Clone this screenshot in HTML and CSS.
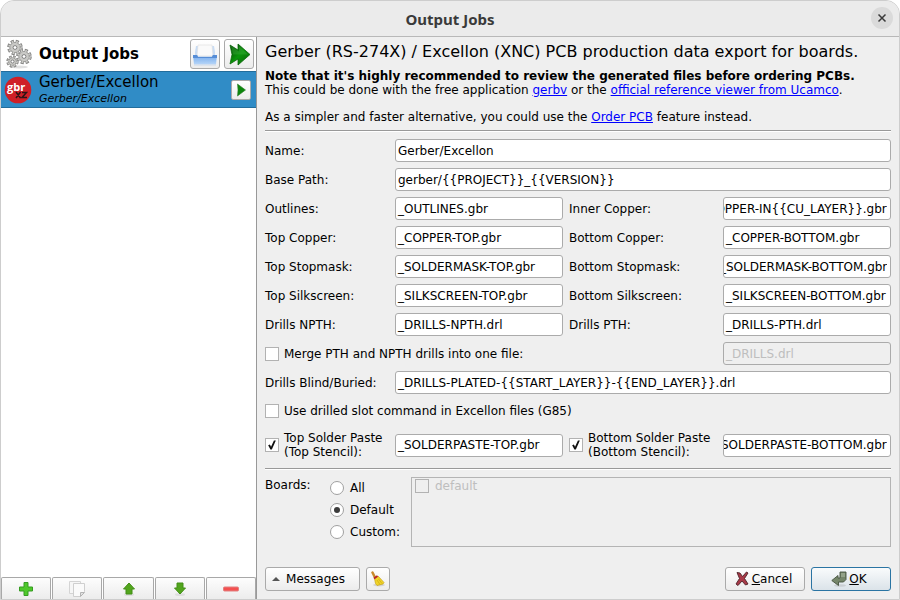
FILE: index.html
```html
<!DOCTYPE html>
<html lang="en">
<head>
<meta charset="utf-8">
<title>Output Jobs</title>
<link rel="stylesheet" href="styles.css">
</head>
<body>
<div class="window">
  <header class="titlebar">
    <h1>Output Jobs</h1>
    <button class="close" type="button" aria-label="Close"><svg width="10" height="10" viewBox="0 0 10 10"><path d="M1.500 1.500l7 7M8.500 1.500l-7 7" fill="none" stroke="#3a3a3a" stroke-width="1.500"/></svg></button>
  </header>
  <div class="content">
    <aside class="sidebar">
      <div class="side-head">
        <svg class="gears" width="26" height="30" viewBox="0 0 26 30">
          <ellipse cx="13" cy="28" rx="9" ry="1.500" fill="#e0e0e0"/>
          <g fill="none" stroke="#828280" stroke-width="3.200">
            <circle cx="9" cy="8.500" r="6.200" stroke-dasharray="3 1.870"/><circle cx="18" cy="17.500" r="6.200" stroke-dasharray="3 1.870"/><circle cx="6.500" cy="22.500" r="4.600" stroke-dasharray="2.300 1.313"/>
          </g>
          <g fill="#c9c9c6" stroke="#8a8a88" stroke-width=".8">
            <circle cx="9" cy="8.500" r="5.200"/><circle cx="18" cy="17.500" r="5.200"/><circle cx="6.500" cy="22.500" r="3.800"/>
          </g>
          <g fill="none" stroke="#c9c9c6" stroke-width="2.200">
            <circle cx="9" cy="8.500" r="5.800" stroke-dasharray="1.600 2.955" stroke-dashoffset="-.6"/><circle cx="18" cy="17.500" r="5.800" stroke-dasharray="1.600 2.955" stroke-dashoffset="-.6"/><circle cx="6.500" cy="22.500" r="4.200" stroke-dasharray="1.100 2.199" stroke-dashoffset="-.5"/>
          </g>
          <g fill="#fff" stroke="#777" stroke-width=".9">
            <circle cx="9" cy="8.500" r="1.900"/><circle cx="18" cy="17.500" r="1.900"/><circle cx="6.500" cy="22.500" r="1.500"/>
          </g>
        </svg>
        <h2>Output Jobs</h2>
        <button class="tool" type="button" aria-label="Open output directory">
          <svg width="26" height="26" viewBox="0 0 26 26">
            <defs><linearGradient id="tray" x2="0" y2="1"><stop stop-color="#5a92dc"/><stop offset=".35" stop-color="#8ab8f0"/><stop offset="1" stop-color="#b7d6f8"/></linearGradient></defs>
            <path d="M3 11l1-6h18l1 6v7H3z" fill="#c8dcf4"/>
            <path d="M6 4h14l1 11H5z" fill="#fafafa" stroke="#ddd" stroke-width=".6"/>
            <path d="M1 14h4l1 2h14l1-2h4l-1 9.500H2z" fill="url(#tray)"/>
            <path d="M1 14h4l1 2h14l1-2h4v3H1z" fill="#568dd6"/>
            <path d="M2 24h22" stroke="#ccd9ea"/>
          </svg>
        </button>
        <button class="tool" type="button" aria-label="Run all jobs">
          <svg width="26" height="26" viewBox="0 0 26 26">
            <defs><linearGradient id="go" x2="1" y2="1"><stop stop-color="#063c06"/><stop offset=".5" stop-color="#0b960b"/><stop offset="1" stop-color="#0a5a0a"/></linearGradient></defs>
            <path d="M4 4l8 5V3l12 10.500L12 24v-6l-8 5 2-9.500z" fill="url(#go)" stroke="#0a6a0a" stroke-width=".8"/>
            <path d="M5 5l8 5.500V5l9 8.500H7z" fill="#3fae3f" opacity=".4"/>
          </svg>
        </button>
      </div>
      <div class="job">
        <svg class="badge" width="28" height="28" viewBox="0 0 28 28">
          <circle cx="14" cy="14" r="13.300" fill="#cf2027"/>
          <text class="badge-top" x="3" y="15">gbr</text>
          <path d="M12 16l4.500 6M16.500 16l-4.500 6M18 16.500h4.500L18 21.500h5" fill="none" stroke="#2c1416" stroke-width="1.500"/>
        </svg>
        <div class="job-text"><div class="job-name">Gerber/Excellon</div><div class="job-type">Gerber/Excellon</div></div>
        <button class="run" type="button" aria-label="Run job"><svg width="14" height="14" viewBox="0 0 14 14"><path d="M3.500 1l8 6-8 6 .5-6z" fill="#0c860c" stroke="#2f7d2f" stroke-width=".6"/></svg></button>
      </div>
      <div class="side-tools">
        <button type="button" aria-label="Add"><svg width="16" height="16" viewBox="0 0 16 16"><path d="M6 1.500h4V6h4.500v4H10v4.500H6V10H1.500V6H6z" fill="#4fc82b" stroke="#369c22"/></svg></button>
        <button type="button" aria-label="Copy"><svg width="16" height="16" viewBox="0 0 16 16"><path d="M.5.500h11v12H.5z" fill="#f6f6f6" stroke="#d4d4d4"/><path d="M4.500 2.500h11v8l-4 5h-7z" fill="#fafafa" stroke="#cfcfcf"/><path d="M11.500 15.500l0-4h4z" fill="#e3e3e3" stroke="#b4b4b4"/></svg></button>
        <button type="button" aria-label="Move up"><svg width="16" height="16" viewBox="0 0 16 16"><ellipse cx="8" cy="13.500" rx="5" ry="1.500" fill="#ddd"/><path d="M8 2l5.500 6H11v5H5V8H2.500z" fill="#52a51d" stroke="#438f17"/></svg></button>
        <button type="button" aria-label="Move down"><svg width="16" height="16" viewBox="0 0 16 16"><ellipse cx="8" cy="13.500" rx="5" ry="1.500" fill="#ddd"/><path d="M5 2h6v5h2.500L8 13 2.500 7H5z" fill="#52a51d" stroke="#438f17"/></svg></button>
        <button type="button" aria-label="Remove"><svg width="16" height="16" viewBox="0 0 16 16"><rect x=".5" y="6" width="15" height="4" rx="1" fill="#f45050" stroke="#e08080"/></svg></button>
      </div>
    </aside>
    <main class="panel">
      <h2 class="headline">Gerber (RS-274X) / Excellon (XNC) PCB production data export for boards.</h2>
      <p class="note"><b>Note that it's highly recommended to review the generated files before ordering PCBs.</b><br>This could be done with the free application <a href="#">gerbv</a> or the <a href="#">official reference viewer from Ucamco</a>.</p>
      <p class="note">As a simpler and faster alternative, you could use the <a href="#">Order PCB</a> feature instead.</p>
      <hr>
      <form class="form" id="job-form">
        <label for="name">Name:</label><input class="wide" type="text" id="name" value="Gerber/Excellon">
        <label for="base">Base Path:</label><input class="wide" type="text" id="base" value="gerber/{{PROJECT}}_{{VERSION}}">
        <label for="outl">Outlines:</label><input type="text" id="outl" value="_OUTLINES.gbr">
        <label for="inner">Inner Copper:</label><input type="text" id="inner" value="_COPPER-IN{{CU_LAYER}}.gbr">
        <label for="tc">Top Copper:</label><input type="text" id="tc" value="_COPPER-TOP.gbr">
        <label for="bc">Bottom Copper:</label><input type="text" id="bc" value="_COPPER-BOTTOM.gbr">
        <label for="ts">Top Stopmask:</label><input type="text" id="ts" value="_SOLDERMASK-TOP.gbr">
        <label for="bs">Bottom Stopmask:</label><input type="text" id="bs" value="_SOLDERMASK-BOTTOM.gbr">
        <label for="tk">Top Silkscreen:</label><input type="text" id="tk" value="_SILKSCREEN-TOP.gbr">
        <label for="bk">Bottom Silkscreen:</label><input type="text" id="bk" value="_SILKSCREEN-BOTTOM.gbr">
        <label for="dn">Drills NPTH:</label><input type="text" id="dn" value="_DRILLS-NPTH.drl">
        <label for="dp">Drills PTH:</label><input type="text" id="dp" value="_DRILLS-PTH.drl">
        <label class="check span3"><input type="checkbox">Merge PTH and NPTH drills into one file:</label><input type="text" aria-label="Merged drills" value="_DRILLS.drl" disabled>
        <label for="bb">Drills Blind/Buried:</label><input class="wide" type="text" id="bb" value="_DRILLS-PLATED-{{START_LAYER}}-{{END_LAYER}}.drl">
        <label class="check slot"><input type="checkbox">Use drilled slot command in Excellon files (G85)</label>
        <label class="check paste"><input type="checkbox" checked><span>Top Solder Paste<br>(Top Stencil):</span></label><input type="text" aria-label="Top solder paste" value="_SOLDERPASTE-TOP.gbr">
        <label class="check paste"><input type="checkbox" checked><span>Bottom Solder Paste<br>(Bottom Stencil):</span></label><input type="text" aria-label="Bottom solder paste" value="_SOLDERPASTE-BOTTOM.gbr">
      </form>
      <hr>
      <div class="boards">
        <span class="boards-label">Boards:</span>
        <div class="radios">
          <label><input type="radio" name="boards">All</label>
          <label><input type="radio" name="boards" checked>Default</label>
          <label><input type="radio" name="boards">Custom:</label>
        </div>
        <div class="board-list"><label><input type="checkbox" disabled>default</label></div>
      </div>
      <footer class="actions">
        <button class="btn messages" type="button"><svg width="8" height="4" viewBox="0 0 8 4"><path d="M0 4l4-4 4 4z" fill="#555"/></svg>Messages</button>
        <button class="btn clear" type="button" aria-label="Clear messages"><svg width="16" height="16" viewBox="0 0 16 16"><ellipse cx="9" cy="14" rx="6" ry="1.500" fill="#d4d4d4"/><path d="M2.500 1.500l2.500 5" stroke="#c98a2c" stroke-width="2.500" stroke-linecap="round"/><path d="M4.500 7.500L8 5l6 6.500-1 1.500-6 1.500-1.500-2z" fill="#f0d42a" stroke="#c9a415" stroke-width=".7"/><path d="M7 9l3 4.500M8.500 8l3.500 4.500" stroke="#cba813" stroke-width=".7"/><path d="M4 7.500l3.500-2.500" stroke="#b8222a" stroke-width="1.800"/></svg></button>
        <button class="btn dialog cancel" type="button"><svg width="16" height="16" viewBox="0 0 16 16"><path d="M3 1.500l3 .500 2.500 3.500L12.500 1l1.500 1-3.500 5.500L14 13l-2.500 1L8 10l-4 4.500L2 13l3.500-5.500z" fill="#a83a48" stroke="#4e2228" stroke-width=".9"/></svg><span><u>C</u>ancel</span></button>
        <button class="btn dialog ok" type="submit" form="job-form"><svg width="16" height="16" viewBox="0 0 16 16"><ellipse cx="9" cy="14.500" rx="6" ry="1.300" fill="#cbd0d4"/><path d="M9 1h6v7.500L12.500 11H7.500v3.500L.8 9.500l6.200-5V7H9z" fill="#75866a" stroke="#46543f" stroke-width=".9"/><path d="M10 2h4v4h-4z" fill="#93a288"/></svg><span><u>O</u>K</span></button>
      </footer>
    </main>
  </div>
</div>
<script src="script.js"></script>
</body>
</html>
```

FILE: styles.css
```css
* { box-sizing: border-box; }
body { margin: 0; background: #fff; color: #000; font: 12px/14px "DejaVu Sans", sans-serif; }
h1, h2, p { margin: 0; }
button, input { font: inherit; color: inherit; }
button { padding: 0; display: flex; align-items: center; justify-content: center; }
.window { display: flex; flex-direction: column; min-height: 100vh; background: #efefef; border: 1px solid #cdcdcd; border-radius: 14px 14px 0 0; overflow: hidden; }
.titlebar { position: relative; display: flex; align-items: center; justify-content: center; height: 36px; background: #ebebeb; border-bottom: 1px solid #b8b8b8; }
.titlebar h1 { font: bold 15px/18px "Noto Sans", sans-serif; color: #3a3a3a; }
.close { position: absolute; right: 6px; top: 6px; width: 22px; height: 22px; border: 0; border-radius: 50%; background: #dadada; }
.content { flex: 1; display: flex; }
.sidebar { width: 256px; flex: none; display: flex; flex-direction: column; background: #fff; border-right: 1px solid #999; }
.side-head { display: flex; align-items: center; gap: 4px; height: 34px; padding: 0 2px 0 5px; }
.side-head h2 { flex: 1; padding-left: 3px; font-size: 15px; line-height: 18px; }
.tool, .run, .btn { border: 1px solid #aaa; border-radius: 3px; background: linear-gradient(#fff, #ececec); }
.tool { width: 30px; height: 30px; }
.job { display: flex; align-items: center; height: 37px; padding: 0 5px 0 3px; background: #308cc6; border-top: 1px solid #226d9c; border-bottom: 1px solid #226d9c; }
.badge-top { font: bold 11px "Open Sans", sans-serif; fill: #fff; }
.job-text { flex: 1; padding-left: 7px; }
.job-name { font-size: 15px; line-height: 18px; }
.job-type { font-size: 11px; line-height: 15px; font-style: italic; }
.run { width: 20px; height: 20px; border-radius: 2px; }
.side-tools { display: flex; gap: 1px; height: 22px; margin-top: auto; }
.side-tools button { flex: 1; border: 1px solid #a8a8a8; border-bottom: 0; border-radius: 2px 2px 0 0; background: linear-gradient(#fdfdfd, #ececec); }
.panel { flex: 1; min-width: 0; display: flex; flex-direction: column; padding: 6px 8px 8px; }
.headline { font-size: 16px; line-height: 18px; font-weight: normal; margin-bottom: 8px; }
.note + .note { margin-top: 13px; }
a { color: #00f; }
hr { width: 100%; height: 2px; margin: 6px 0 7px; border: 0; border-top: 1px solid #999; background: #fff; }
.form { display: grid; grid-template-columns: 124px 1fr 148px 1fr; gap: 6px; align-items: center; }
input[type="text"] { width: 100%; min-width: 0; height: 23px; padding: 0 3px 0 0; text-indent: 2px; border: 1px solid #ababab; border-radius: 3px; background: #fff; outline: 0; }
input[type="text"]:disabled { background: #efefef; color: #bebebe; }
.wide { grid-column: 2 / -1; }
.span3 { grid-column: span 3; }
.check { display: flex; align-items: center; gap: 5px; }
.slot { grid-column: 1 / -1; min-height: 22px; }
.paste { min-height: 34px; }
input[type="checkbox"], input[type="radio"] { appearance: none; flex: none; display: grid; place-items: center; width: 14px; height: 14px; margin: 0; border: 1px solid #b2b2b2; background: #fff; }
input[type="checkbox"]:checked::after { content: ""; width: 8px; height: 10px; background: #111; clip-path: polygon(2% 52%, 24% 46%, 38% 68%, 74% 4%, 98% 4%, 48% 96%, 30% 96%); }
input[type="checkbox"]:disabled { background: #efefef; }
input[type="radio"] { border-color: #a0a0a0; border-radius: 50%; }
input[type="radio"]:checked::after { content: ""; width: 6px; height: 6px; border-radius: 50%; background: #3c3c3c; }
.boards { display: flex; align-items: flex-start; }
.boards-label { width: 65px; padding-top: 1px; }
.radios { width: 81px; }
.radios label { display: flex; align-items: center; gap: 6px; height: 22px; }
.board-list { flex: 1; height: 70px; padding: 1px 3px; border: 1px solid #b4b4b4; color: #bebebe; }
.board-list label { display: flex; align-items: center; gap: 6px; }
.actions { display: flex; gap: 6px; margin-top: auto; }
.btn { height: 24px; }
.messages { width: 95px; gap: 6px; padding-right: 8px; }
.clear { width: 24px; }
.dialog { width: 80px; gap: 2px; padding-right: 4px; }
.cancel { margin-left: auto; }
.ok { border-color: #2a74a3; background: linear-gradient(#f9fbfc, #dbe3e9); }
```

FILE: script.js
```js
// Show the end of values that are longer than their field.
document.querySelectorAll('input[type="text"]').forEach(function (field) {
  field.scrollLeft = field.scrollWidth;
});
```
